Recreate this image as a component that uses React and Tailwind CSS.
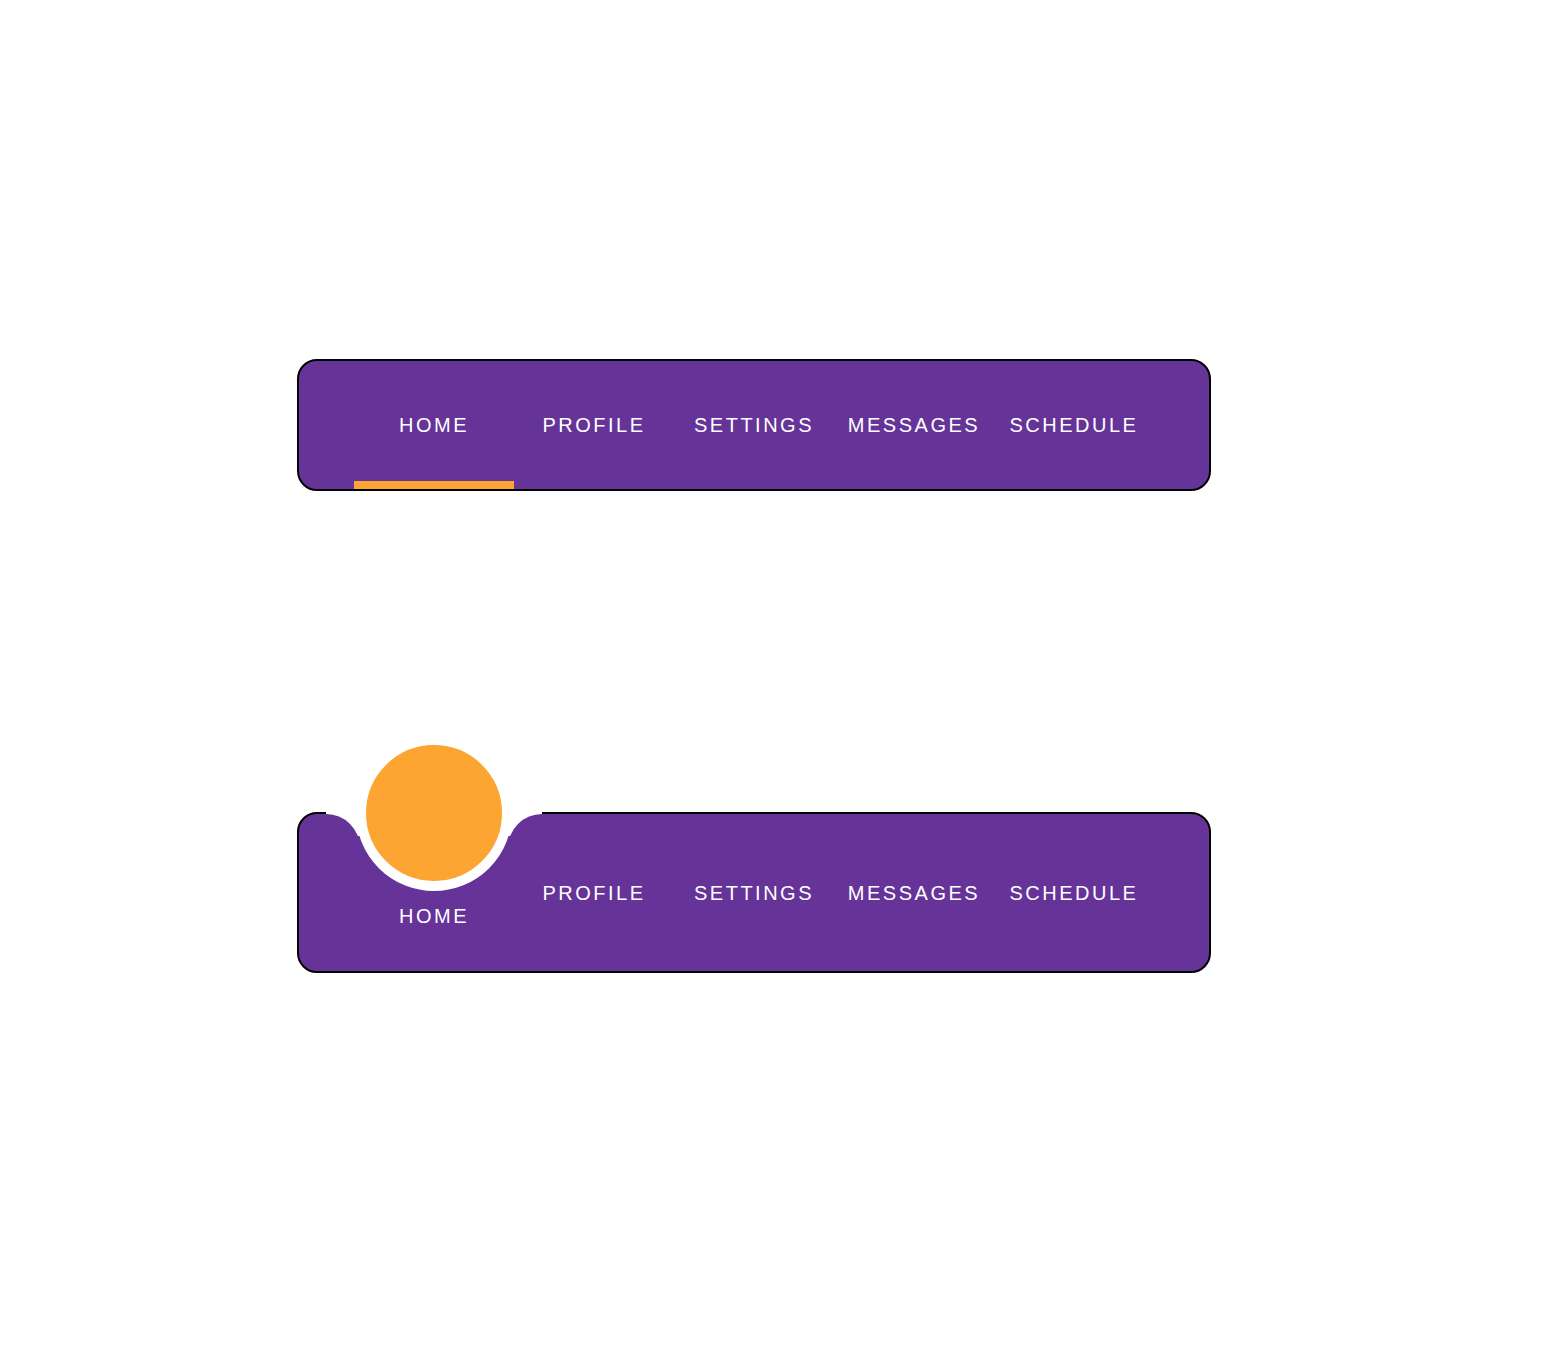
import React from "react";

const items = ["HOME", "PROFILE", "SETTINGS", "MESSAGES", "SCHEDULE"];

const font = { fontFamily: '"Liberation Sans", Arial, sans-serif' };

function Label({ children, className = "" }) {
  return (
    <span className={"relative text-[20px] leading-none tracking-[2.5px] text-white " + className}>
      {children}
    </span>
  );
}

function NavOne() {
  return (
    <nav className="w-[914px] h-[132px] rounded-[20px] border-2 border-black bg-[#663399]">
      <ul className="flex h-full justify-center">
        {items.map((it, i) => (
          <li key={it} className="relative flex w-[160px] items-center justify-center">
            <Label>{it}</Label>
            {i === 0 && <span className="absolute bottom-0 left-0 h-2 w-full bg-[#fca533]" />}
          </li>
        ))}
      </ul>
    </nav>
  );
}

function Notch() {
  return (
    <>
      {/* white cut between the two rounded shoulders */}
      <div className="absolute left-[-28px] top-[-2px] flex h-[24px] w-[216px] items-start justify-between overflow-hidden bg-white pt-[2px]">
        <div className="h-[34px] w-[34px] shrink-0 rounded-tr-[34px] bg-[#663399]" />
        <div className="h-[34px] w-[34px] shrink-0 rounded-tl-[34px] bg-[#663399]" />
      </div>
      {/* floating indicator */}
      <div className="absolute left-[2px] top-[-79px] h-[156px] w-[156px] rounded-full border-[10px] border-white bg-[#fca533]" />
    </>
  );
}

function NavTwo() {
  return (
    <nav className="w-[914px] h-[161px] rounded-[20px] border-2 border-black bg-[#663399]">
      <ul className="flex h-full justify-center">
        {items.map((it, i) => (
          <li key={it} className="relative flex w-[160px] items-center justify-center">
            {i === 0 && <Notch />}
            <Label className={i === 0 ? "top-[23px]" : ""}>{it}</Label>
          </li>
        ))}
      </ul>
    </nav>
  );
}

export default function App() {
  return (
    <div className="flex min-h-[1350px] w-full flex-col gap-[321px] bg-white pt-[359px] pl-[297px]" style={font}>
      <NavOne />
      <NavTwo />
    </div>
  );
}
